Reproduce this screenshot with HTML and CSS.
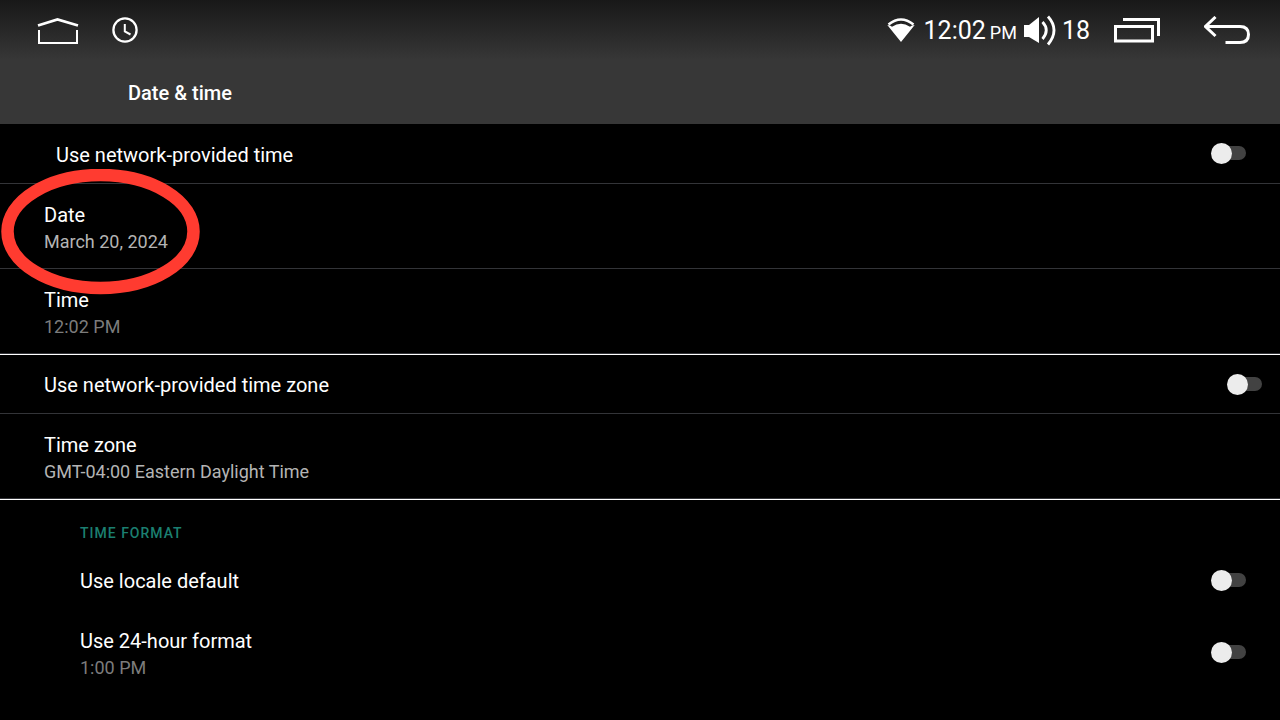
FILE: index.html
```html
<!DOCTYPE html>
<html lang="en">
<head>
  <meta charset="UTF-8">
  <meta name="viewport" content="width=device-width, initial-scale=1">
  <title>Date &amp; time</title>
  <link rel="stylesheet" href="styles.css">
</head>
<body>
  <header class="top">
    <div class="status-bar">
      <div class="status-left">
        <button class="icon-btn" aria-label="Home">
          <svg width="42" height="28" viewBox="0 0 42 28" fill="none" stroke="#fff" stroke-width="2">
            <path d="M1 9.500L20.500 3.500L41 9.500" stroke-width="2.800"/>
            <path d="M2 14V27H40V14"/>
          </svg>
        </button>
        <svg width="26" height="26" viewBox="0 0 26 26" fill="none" stroke="#fff" stroke-width="2.300">
          <circle cx="13" cy="13" r="11.600"/>
          <path d="M12.800 7V14.500L18.500 17.500" stroke-width="2"/>
        </svg>
      </div>

      <div class="status-right">
        <svg width="28" height="24" viewBox="0 0 28 24">
          <path d="M1.500 6.500Q14 -3.500 26.500 6.500" fill="none" stroke="#fff" stroke-width="2.500"/>
          <path d="M0.300 7L3 7.500L5 8.800Q14 2.500 23 8.800L25 7.500L27.700 7L14 24Z" fill="#fff"/>
        </svg>
        <span class="clock">12:02<span class="ampm">PM</span></span>
        <span class="volume">
          <svg width="32" height="32" viewBox="0 0 32 32">
            <path d="M0 10H5L15 2V28L5 22H0Z" fill="#fff"/>
            <path d="M18.500 7Q26 15 18.500 24M24 1.500Q36 15 24 29.500" fill="none" stroke="#fff" stroke-width="2.800"/>
          </svg>
          18
        </span>
        <button class="icon-btn recents" aria-label="Recent apps">
          <svg width="46" height="26" viewBox="0 0 46 26" fill="none" stroke="#fff" stroke-width="3">
            <path d="M1.500 9.500H38.500V24H1.500Z"/>
            <path d="M9 2.500H44.500V19"/>
          </svg>
        </button>
        <button class="icon-btn back" aria-label="Back">
          <svg width="46" height="28" viewBox="0 0 46 28" fill="none" stroke="#fff" stroke-width="3">
            <path d="M11.500 1L1.500 10.500L11.500 20"/>
            <path d="M2 10.500H36Q44.500 10.500 44.500 18.500Q44.500 26.500 36 26.500H21.500"/>
          </svg>
        </button>
      </div>
    </div>
    <h1>Date &amp; time</h1>
  </header>

  <main>
    <section class="group">
      <label class="row inset">
        <span class="title">Use network-provided time</span>
        <input type="checkbox" class="switch">
      </label>
      <div class="marked">
        <button class="row tall">
          <span class="title">Date</span>
          <span class="summary">March 20, 2024</span>
        </button>
        <svg class="marker" width="200" height="126" viewBox="0 0 200 126">
          <ellipse cx="100.500" cy="62.500" rx="93" ry="56.500" fill="none" stroke="#ff3b30" stroke-width="12.500"/>
        </svg>
      </div>
      <button class="row tall">
        <span class="title">Time</span>
        <span class="summary dim">12:02 PM</span>
      </button>
    </section>

    <section class="group">
      <label class="row wide">
        <span class="title">Use network-provided time zone</span>
        <input type="checkbox" class="switch">
      </label>
      <button class="row tall">
        <span class="title">Time zone</span>
        <span class="summary">GMT-04:00 Eastern Daylight Time</span>
      </button>
    </section>

    <section class="format">
      <h2>Time format</h2>
      <label class="row">
        <span class="title">Use locale default</span>
        <input type="checkbox" class="switch">
      </label>
      <label class="row tall">
        <span class="text">
          <span class="title">Use 24-hour format</span>
          <span class="summary dim">1:00 PM</span>
        </span>
        <input type="checkbox" class="switch">
      </label>
    </section>
  </main>
</body>
</html>
```

FILE: styles.css
```css
* {
  box-sizing: border-box;
}

body {
  margin: 0;
  background-color: #000;
  color: #fff;
  font-family: Roboto, sans-serif;
  font-size: 20px;
  line-height: 28px;
}

svg {
  display: block;
}

button {
  border: none;
  background: none;
  color: inherit;
  font: inherit;
  cursor: pointer;
}

/* Header */
.top {
  background: linear-gradient(#181818, #373737 60px);
}

.status-bar {
  display: flex;
  justify-content: space-between;
  align-items: center;
  height: 60px;
  padding: 0 30px 0 37px;
}

.status-left,
.status-right {
  display: flex;
  align-items: center;
}

.status-left {
  gap: 33px;
}

.status-right {
  font-size: 25px;
}

.icon-btn {
  padding: 0;
}

.clock {
  display: flex;
  align-items: baseline;
  gap: 4px;
  margin-left: 9px;
  padding-top: 4px;
}

.ampm {
  font-size: 18px;
}

.volume {
  display: flex;
  align-items: center;
  gap: 6px;
  margin-left: 7px;
  padding-top: 2px;
}

.recents {
  margin-left: 24px;
}

.back {
  margin-left: 44px;
}

h1 {
  margin: 0;
  padding: 19px 128px 17px;
  font-size: 20px;
  font-weight: 500;
}

/* Rows */
.group {
  border-bottom: 1px solid #fff;
}

.row {
  display: flex;
  justify-content: space-between;
  align-items: center;
  width: 100%;
  min-height: 60px;
  padding: 0 34px 0 44px;
  border-bottom: 1px solid #333438;
}

.row.inset {
  padding-left: 56px;
}

.row.wide {
  min-height: 59px;
  padding-right: 18px;
}

.row.tall {
  min-height: 85px;
}

button.row {
  flex-direction: column;
  justify-content: center;
  align-items: flex-start;
  padding-top: 4px;
}

.title,
.summary {
  display: block;
}

label .title {
  padding-top: 2px;
}

.summary {
  color: #b4b4b4;
  font-size: 18px;
  line-height: 26px;
}

.summary.dim {
  color: #7c7c7c;
}

.format .row {
  padding-left: 80px;
  border-bottom: none;
}

h2 {
  margin: 0;
  padding: 19px 80px 3px;
  color: #1b7f70;
  font-size: 14px;
  font-weight: 500;
  letter-spacing: 1px;
  text-transform: uppercase;
}

/* Switch */
.switch {
  appearance: none;
  position: relative;
  width: 35px;
  height: 21px;
  margin: 0;
  cursor: pointer;
}

.switch::before {
  content: "";
  position: absolute;
  inset: 3px 0 4px 3px;
  border-radius: 7px;
  background-color: #424242;
}

.switch::after {
  content: "";
  position: absolute;
  top: 0;
  left: 0;
  width: 21px;
  height: 21px;
  border-radius: 50%;
  background-color: #ececec;
}

.switch:checked::after {
  left: 14px;
}

/* Red ring around the date */
.marked {
  position: relative;
}

.marker {
  position: absolute;
  top: -15px;
  left: 0;
  pointer-events: none;
}
```
